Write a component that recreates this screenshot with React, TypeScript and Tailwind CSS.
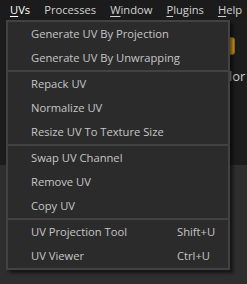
import React from 'react';

const MENUBAR = [
  { label: 'UVs', key: 'U', rest: 'Vs', active: true },
  { label: 'Processes', key: '', rest: 'Processes' },
  { label: 'Window', key: 'W', rest: 'indow' },
  { label: 'Plugins', key: 'P', rest: 'lugins' },
  { label: 'Help', key: 'H', rest: 'elp' },
];

type Entry = { label: string; shortcut?: string } | 'sep';

const ITEMS: Entry[] = [
  { label: 'Generate UV By Projection' },
  { label: 'Generate UV By Unwrapping' },
  'sep',
  { label: 'Repack UV' },
  { label: 'Normalize UV' },
  { label: 'Resize UV To Texture Size' },
  'sep',
  { label: 'Swap UV Channel' },
  { label: 'Remove UV' },
  { label: 'Copy UV' },
  'sep',
  { label: 'UV Projection Tool', shortcut: 'Shift+U' },
  { label: 'UV Viewer', shortcut: 'Ctrl+U' },
];

export default function App() {
  return (
    <div
      className="relative w-[247px] h-[284px] overflow-hidden bg-[#2e2e2e] text-[11.2px]"
      style={{ fontFamily: '"Open Sans", "Noto Sans", sans-serif' }}
    >
      {/* Menu bar */}
      <div className="h-[20px] flex items-center gap-[14px] pl-[10px] bg-[#1b1b1b] whitespace-nowrap text-[11.2px]">
        {MENUBAR.map((m) => (
          <span key={m.label} className={m.active ? 'text-white' : 'text-[#d2d2d2]'}>
            {m.key && <span className="underline underline-offset-2">{m.key}</span>}
            {m.rest}
          </span>
        ))}
      </div>

      {/* Toolbar area behind the menu */}
      <div className="h-[145px] bg-[#1c1c1c] flex justify-end">
        <div className="w-[17px] pt-[17px] flex flex-col items-start gap-[12px] overflow-hidden">
          <div className="w-[17px] h-[18px] -ml-[12px] rounded-[3px] bg-[#e3a41f] border border-[#9a6a0c]" />
          <span className="-ml-[1px] text-[#cfcfcf] text-[13px] leading-[18px]">lor</span>
        </div>
      </div>

      {/* Dropdown */}
      <div className="absolute left-[6px] top-[20px] w-[224px] border-2 border-[#424242] bg-[#2b2b2b] shadow-[3px_3px_3px_rgba(0,0,0,0.55)]">
        {ITEMS.map((it, i) =>
          it === 'sep' ? (
            <div key={i} className="h-[2px] bg-[#424242]" />
          ) : (
            <div key={i} className="h-[24px] flex items-center pl-[23px] text-[#c6c6c6] whitespace-nowrap">
              <span className="flex-1">{it.label}</span>
              {it.shortcut && <span className="w-[51px]">{it.shortcut}</span>}
            </div>
          )
        )}
      </div>
    </div>
  );
}
